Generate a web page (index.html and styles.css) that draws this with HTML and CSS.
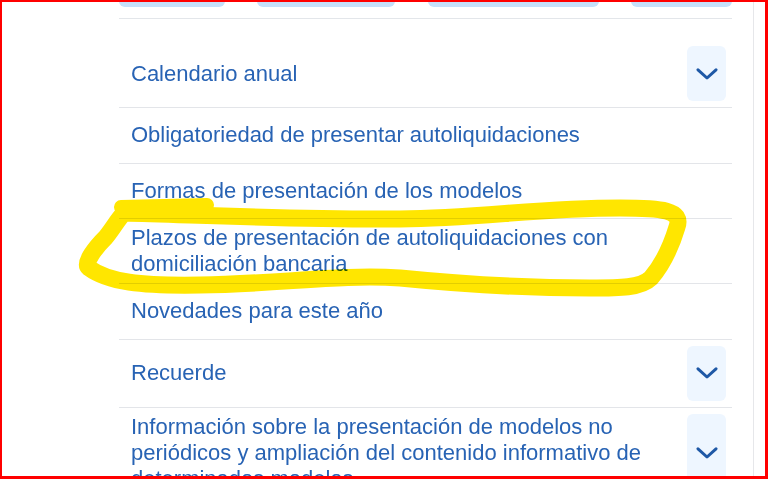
FILE: index.html
```html
<!DOCTYPE html>
<html lang="es">
<head>
<meta charset="utf-8">
<title>Modelos</title>
<link rel="stylesheet" href="styles.css">
</head>
<body>
<div class="frame">
  <div class="page">
    <div class="content">
      <div class="tabs">
        <span class="tab tab-1"></span>
        <span class="tab tab-2"></span>
        <span class="tab tab-3"></span>
        <span class="tab tab-4"></span>
      </div>
      <ul class="acc">
        <li class="row">
          <a class="label">Calendario anual</a>
          <button class="toggle" aria-label="Desplegar"><svg width="22" height="12" viewBox="0 0 22 12"><path d="M2 1.8 L11 10 L20 1.8" fill="none" stroke="#1e58a6" stroke-width="3" stroke-linecap="round" stroke-linejoin="round"/></svg></button>
        </li>
        <li class="row"><a class="label">Obligatoriedad de presentar autoliquidaciones</a></li>
        <li class="row"><a class="label">Formas de presentación de los modelos</a></li>
        <li class="row"><a class="label">Plazos de presentación de autoliquidaciones con domiciliación bancaria</a></li>
        <li class="row"><a class="label">Novedades para este año</a></li>
        <li class="row">
          <a class="label">Recuerde</a>
          <button class="toggle" aria-label="Desplegar"><svg width="22" height="12" viewBox="0 0 22 12"><path d="M2 1.8 L11 10 L20 1.8" fill="none" stroke="#1e58a6" stroke-width="3" stroke-linecap="round" stroke-linejoin="round"/></svg></button>
        </li>
        <li class="row">
          <a class="label">Información sobre la presentación de modelos no periódicos y ampliación del contenido informativo de determinados modelos</a>
          <button class="toggle" aria-label="Desplegar"><svg width="22" height="12" viewBox="0 0 22 12"><path d="M2 1.8 L11 10 L20 1.8" fill="none" stroke="#1e58a6" stroke-width="3" stroke-linecap="round" stroke-linejoin="round"/></svg></button>
        </li>
      </ul>
    </div>
  </div>
  <svg class="marker" width="768" height="479" viewBox="0 0 768 479">
    <path d="M121 207 L207 205" fill="none" stroke="#ffe600" stroke-width="14" stroke-linecap="round"/>
    <path d="M124 213 C 200 215, 300 220, 400 219 C 480 218, 540 208, 620 208 C 662 208, 683 210, 677 227 C 671 247, 663 264, 651 278 C 641 288, 620 288, 590 288 C 520 288, 460 284, 400 278 C 340 274, 280 284, 200 285 C 140 286, 108 282, 89 268 C 83 263, 96 247, 106 237 C 114 227, 118 219, 124 213 Z" fill="none" stroke="#ffe600" stroke-width="17" stroke-linecap="round" stroke-linejoin="round"/>
  </svg>
</div>
</body>
</html>
```
FILE: styles.css
```css
html, body {
  margin: 0;
  padding: 0;
  background: #ffffff;
}

.frame {
  position: relative;
  width: 768px;
  height: 479px;
  box-sizing: border-box;
  border-style: solid;
  border-color: #ff0000;
  border-width: 2px 3px 3px 2px;
  overflow: hidden;
  background: #ffffff;
  font-family: "Liberation Sans", Arial, sans-serif;
}

.page {
  width: 751px;
  height: 100%;
  border-right: 1px solid #e6e7ea;
}

.content {
  margin-left: 117px;
  width: 613px;
}

.tabs {
  display: flex;
  justify-content: space-between;
  padding-bottom: 11px;
  border-bottom: 1px solid #e3e6ea;
}

.tab {
  display: block;
  height: 30px;
  margin-top: -25px;
  border-radius: 6px;
  background: #c5e0fa;
}

.tab-1 { width: 106px; }
.tab-2 { width: 138px; }
.tab-3 { width: 171px; }
.tab-4 { width: 101px; }

.acc {
  list-style: none;
  margin: 21px 0 0;
  padding: 0;
}

.row {
  display: flex;
  align-items: stretch;
  gap: 12px;
  min-height: 42.5px;
  padding: 6px 6px 6px 12px;
  border-bottom: 1px solid #e3e5e9;
}

.label {
  flex: 1;
  align-self: center;
  font-size: 22px;
  line-height: 26px;
  color: #2863b4;
  text-decoration: none;
  cursor: pointer;
}

.toggle {
  flex: none;
  width: 39px;
  min-height: 55px;
  padding: 0;
  border: 0;
  border-radius: 6px;
  background: #eef6ff;
  display: flex;
  align-items: center;
  justify-content: center;
}

.toggle svg {
  display: block;
}

.marker {
  position: absolute;
  left: -2px;
  top: -2px;
  pointer-events: none;
  mix-blend-mode: multiply;
}
```
